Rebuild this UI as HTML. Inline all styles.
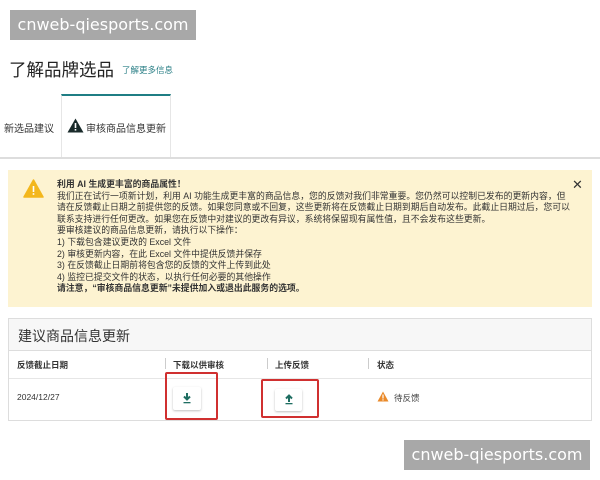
<!DOCTYPE html>
<html><head><meta charset="utf-8"><style>
*{margin:0;padding:0;box-sizing:border-box}
body{width:600px;height:480px;background:#fff;position:relative;overflow:hidden;font-family:"Liberation Sans","Noto Sans CJK SC",sans-serif;color:#222}
.a{position:absolute;white-space:nowrap}
.wm{background:#a8a8a8;color:#fff;font-size:16px;line-height:30px;text-align:center;font-family:"DejaVu Sans",sans-serif}
.alert{left:8px;top:170px;width:584px;height:137px;background:#fdf3d1}
.at{left:57px;top:179px;font-size:8.85px;line-height:11.6px;color:#333}
.card{left:8px;top:318px;width:584px;height:103px;border:1px solid #ddd;background:#fff}
.btn{background:#fff;box-shadow:0 1px 2px rgba(0,0,0,.25);border-radius:2px}
.red{border:2px solid #d03030;border-radius:2px}
.hd{font-size:8.5px;color:#333;font-weight:bold}
</style></head><body>
<div class="a wm" style="left:10px;top:10px;width:186px">cnweb-qiesports.com</div>
<div class="a" style="left:9px;top:57px;font-size:17.5px;color:#222">了解品牌选品</div>
<div class="a" style="left:122px;top:64px;font-size:8.5px;color:#2a7f86">了解更多信息</div>
<div class="a" style="left:61px;top:94px;width:110px;height:64px;border:1px solid #e6e6e6;border-top:2px solid #1f7e84;border-bottom:none"></div>
<div class="a" style="left:0;top:157px;width:600px;height:2px;background:#ddd"></div>
<div class="a" style="left:4px;top:120px;font-size:10px;color:#333">新选品建议</div>
<svg class="a" style="left:67px;top:118px" width="17" height="15" viewBox="0 0 17 15"><path d="M8.5 0.5L16.5 14.5H0.5Z" fill="#1a2b2b"/><rect x="7.7" y="5" width="1.6" height="5" fill="#fff"/><rect x="7.7" y="11" width="1.6" height="1.6" fill="#fff"/></svg>
<div class="a" style="left:86px;top:120px;font-size:10px;color:#333">审核商品信息更新</div>
<div class="a alert"></div>
<svg class="a" style="left:23px;top:179px" width="21" height="19" viewBox="0 0 21 19"><path d="M10.5 1L20 18H1Z" fill="#f3b71d" stroke="#f3b71d" stroke-linejoin="round" stroke-width="1.5"/><rect x="9.7" y="7" width="1.6" height="6" fill="#fff"/><rect x="9.7" y="14.2" width="1.6" height="1.6" fill="#fff"/></svg>
<div class="a" style="left:572px;top:177px;font-size:13px;color:#333">✕</div>
<div class="a at"><b>利用 AI 生成更丰富的商品属性！</b><br>我们正在试行一项新计划，利用 AI 功能生成更丰富的商品信息，您的反馈对我们非常重要。您仍然可以控制已发布的更新内容，但<br>请在反馈截止日期之前提供您的反馈。如果您同意或不回复，这些更新将在反馈截止日期到期后自动发布。此截止日期过后，您可以<br>联系支持进行任何更改。如果您在反馈中对建议的更改有异议，系统将保留现有属性值，且不会发布这些更新。<br>要审核建议的商品信息更新，请执行以下操作：<br>1) 下载包含建议更改的 Excel 文件<br>2) 审核更新内容，在此 Excel 文件中提供反馈并保存<br>3) 在反馈截止日期前将包含您的反馈的文件上传到此处<br>4) 监控已提交文件的状态，以执行任何必要的其他操作<br><b>请注意，“审核商品信息更新”未提供加入或退出此服务的选项。</b></div>
<div class="a card"></div>
<div class="a" style="left:9px;top:319px;width:582px;height:32px;background:#f7f7f7;border-bottom:1px solid #ddd"></div>
<div class="a" style="left:18px;top:326px;font-size:14px;color:#333">建议商品信息更新</div>
<div class="a" style="left:9px;top:378px;width:582px;height:1px;background:#e6e6e6"></div>
<div class="a hd" style="left:17px;top:359px">反馈截止日期</div>
<div class="a" style="left:165px;top:358px;width:1px;height:11px;background:#ccc"></div>
<div class="a hd" style="left:173px;top:359px">下载以供审核</div>
<div class="a" style="left:267px;top:358px;width:1px;height:11px;background:#ccc"></div>
<div class="a hd" style="left:275px;top:359px">上传反馈</div>
<div class="a" style="left:368px;top:358px;width:1px;height:11px;background:#ccc"></div>
<div class="a hd" style="left:377px;top:359px">状态</div>
<div class="a" style="left:17px;top:392px;font-size:8.5px;color:#333">2024/12/27</div>
<div class="a red" style="left:165px;top:372px;width:53px;height:48px"></div>
<div class="a red" style="left:261px;top:379px;width:58px;height:39px"></div>
<div class="a btn" style="left:173px;top:387px;width:28px;height:23px"></div>
<svg class="a" style="left:182px;top:393px" width="10" height="11" viewBox="0 0 10 11"><path d="M5 0V6M2 3.5L5 6.5L8 3.5" stroke="#1f6e62" stroke-width="2" fill="none"/><rect x="1.5" y="9" width="7" height="1.3" fill="#1f6e62"/></svg>
<div class="a btn" style="left:275px;top:389px;width:27px;height:22px"></div>
<svg class="a" style="left:284px;top:394px" width="10" height="11" viewBox="0 0 10 11"><path d="M5 8V2M2 4.5L5 1.5L8 4.5" stroke="#1f6e62" stroke-width="2" fill="none"/><rect x="1.5" y="9" width="7" height="1.3" fill="#1f6e62"/></svg>
<svg class="a" style="left:377px;top:391px" width="12" height="11" viewBox="0 0 12 11"><path d="M6 0.5L11.5 10.5H0.5Z" fill="#ea8a2a"/><rect x="5.4" y="3.5" width="1.2" height="4" fill="#fff"/><rect x="5.4" y="8.3" width="1.2" height="1.2" fill="#fff"/></svg>
<div class="a" style="left:394px;top:392px;font-size:8.5px;color:#444">待反馈</div>
<div class="a wm" style="left:404px;top:440px;width:186px">cnweb-qiesports.com</div>
</body></html>
